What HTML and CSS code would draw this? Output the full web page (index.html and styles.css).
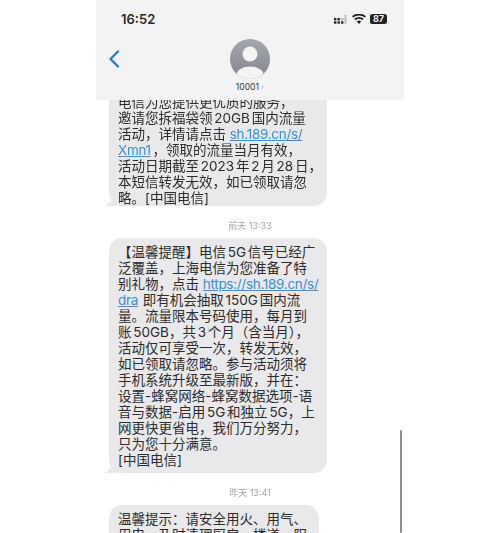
FILE: index.html
```html
<!DOCTYPE html>
<html lang="zh">
<head>
<meta charset="utf-8">
<title>10001</title>
<link rel="stylesheet" href="styles.css">
</head>
<body>
<div class="phone">
  <header class="top">
    <div class="status">
      <span class="clock">16:52</span>
      <div class="status-icons">
        <svg class="signal" viewBox="0 0 14 9" width="14" height="9"><g fill="#222"><rect x="0" y="3" width="2.400" height="2.400"/><rect x="0" y="6.300" width="2.400" height="2.400"/><rect x="3.500" y="3" width="2.400" height="2.400"/><rect x="3.500" y="6.300" width="2.400" height="2.400"/><rect x="7" y="6.300" width="2.400" height="2.400"/></g><g fill="#b5b5b5"><rect x="7" y="3" width="2.400" height="2.400"/><rect x="10.500" y="0" width="2" height="2.400"/><rect x="10.500" y="3" width="2" height="5.700"/></g></svg>
        <svg class="wifi" viewBox="0 0 14 10" width="14" height="10"><path d="M7 10 4.800 7.400a3.400 3.400 0 0 1 4.400 0zM3.700 6.200 2.300 4.700a7 7 0 0 1 9.400 0l-1.400 1.500a5 5 0 0 0-6.600 0zM1.300 3.600 0 2.200a10.400 10.400 0 0 1 14 0l-1.300 1.400a8.500 8.500 0 0 0-11.400 0z" fill="#222"/></svg>
        <span class="battery">87</span>
      </div>
    </div>
    <svg class="back" viewBox="0 0 12 18" width="12" height="18"><path d="M10 1.500 2.500 9l7.500 7.500" fill="none" stroke="#1f7bc9" stroke-width="2.200" stroke-linecap="round" stroke-linejoin="round"/></svg>
    <div class="contact">
      <svg class="avatar" viewBox="0 0 40 40" width="40" height="40">
        <defs>
          <linearGradient id="av" x1="0" y1="0" x2="0" y2="1"><stop offset="0" stop-color="#a5a7ae"/><stop offset="1" stop-color="#84868e"/></linearGradient>
          <clipPath id="circ"><circle cx="20" cy="20" r="20"/></clipPath>
        </defs>
        <circle cx="20" cy="20" r="20" fill="url(#av)"/>
        <g clip-path="url(#circ)" fill="#f4f4f4"><circle cx="20" cy="15" r="7.500"/><ellipse cx="20" cy="36" rx="13.500" ry="8.500"/></g>
      </svg>
      <div class="name">10001<span class="name-arrow">›</span></div>
    </div>
  </header>

  <main class="thread">
    <div class="bubble first">电信为您提供更优质的服务，<br>邀请您拆福袋领 20GB 国内流量<br>活动，详情请点击 <a class="lnk gap">sh.189.cn/s/</a><br><a class="lnk">Xmn1</a> ，领取的流量当月有效，<br>活动日期截至 2023 年 2 月 28 日，<br>本短信转发无效，如已领取请忽<br>略。[中国电信]</div>
    <div class="stamp">前天 13:33</div>
    <div class="bubble">【温馨提醒】电信 5G 信号已经广<br>泛覆盖，上海电信为您准备了特<br>别礼物，点击 <a class="lnk gap">https://sh.189.cn/s/</a><br><a class="lnk after">dra</a> 即有机会抽取 150G 国内流<br>量。流量限本号码使用，每月到<br>账 50GB，共 3 个月（含当月），<br>活动仅可享受一次，转发无效，<br>如已领取请忽略。参与活动须将<br>手机系统升级至最新版，并在：<br>设置-蜂窝网络-蜂窝数据选项-语<br>音与数据-启用 5G 和独立 5G，上<br>网更快更省电，我们万分努力，<br>只为您十分满意。<br>[中国电信]</div>
    <div class="stamp">昨天 13:41</div>
    <div class="bubble last">温馨提示：请安全用火、用气、<br>用电，及时清理厨房、楼道、阳</div>
  </main>
  <div class="scrollbar"></div>
</div>
</body>
</html>
```
FILE: styles.css
```css
* { box-sizing: border-box; }
html, body { margin: 0; padding: 0; background: #fff; }
body { width: 500px; height: 533px; overflow: hidden; }
.phone {
  position: relative;
  width: 308px;
  height: 533px;
  margin-left: 96px;
  overflow: hidden;
  font-family: Inter, "Noto Sans CJK SC", sans-serif;
  filter: blur(0.35px);
}
.top {
  position: absolute;
  top: 0; left: 0; right: 0;
  height: 100px;
  background: #f3f3f3;
  z-index: 2;
}
.status {
  display: flex;
  justify-content: space-between;
  align-items: center;
  padding: 11px 17px 0 25px;
}
.clock { font-size: 13px; font-weight: 600; color: #2a2a2a; line-height: 16px; }
.status-icons { display: flex; align-items: center; gap: 4px; }
.battery {
  display: block;
  width: 17px; height: 10px;
  background: #222;
  border-radius: 2.500px;
  color: #f3f3f3;
  font-size: 9px;
  font-weight: 700;
  line-height: 10px;
  text-align: center;
}
.back { position: absolute; left: 12px; top: 50px; }
.contact {
  position: absolute;
  top: 39px; left: 0; right: 0;
  display: flex;
  flex-direction: column;
  align-items: center;
}
.avatar { display: block; }
.name { font-size: 8.500px; color: #3a3a3a; line-height: 11px; margin-top: 3px; }
.name-arrow { color: #c4c4c4; margin-left: 2px; }
.thread {
  padding: 88px 0 0 13px;
  width: 308px;
}
.bubble {
  position: relative;
  width: 218px;
  padding: 6px 0 5px 9px;
  background: #e9e9eb;
  border-radius: 13px;
  font-size: 13.500px;
  line-height: 16px;
  color: #2c2c2e;
  white-space: nowrap;
  word-spacing: -2px;
}
.bubble::before {
  content: "";
  position: absolute;
  left: -4px; bottom: 0;
  width: 12px; height: 10px;
  background: #e9e9eb;
  clip-path: polygon(0 100%, 100% 0, 100% 100%);
}
.bubble.first { height: 118px; }
.bubble.last { width: 210px; height: 60px; }
.bubble.last::before { display: none; }
.lnk { color: #3d8fd6; text-decoration: underline; letter-spacing: -0.3px; }
.lnk.gap { margin-left: 2px; }
.lnk.after { margin-right: 3px; }
.stamp {
  width: 282px;
  text-align: center;
  font-size: 9px;
  line-height: 12px;
  color: #a2a2a6;
  padding: 14px 0 7px;
  height: 32px;
}
.scrollbar {
  position: absolute;
  left: 304px; top: 430px;
  width: 2px; height: 103px;
  background: #8e8e8e;
  border-radius: 1px;
}
```
